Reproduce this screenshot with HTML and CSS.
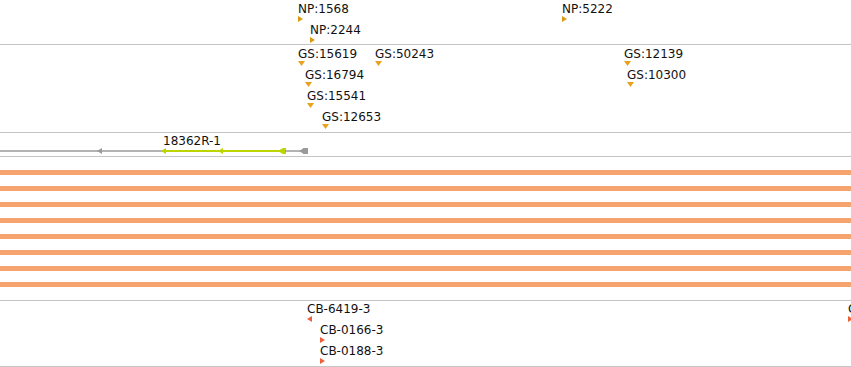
FILE: index.html
```html
<!DOCTYPE html>
<html lang="en">
<head>
    <meta charset="UTF-8">
    <title>Track View</title>
    <link rel="stylesheet" href="styles.css">
</head>
<body>

    <div class="tracks">
        <!-- NP track -->
        <div class="track track-np">
            <div class="feature" style="left:298px; top:2px;">
                <span class="label">NP:1568</span>
                <svg class="mark" width="6" height="6"><polygon points="0,0 5,3 0,6" fill="#d79a10"/></svg>
            </div>
            <div class="feature" style="left:310px; top:23px;">
                <span class="label">NP:2244</span>
                <svg class="mark" width="6" height="6"><polygon points="0,0 5,3 0,6" fill="#d79a10"/></svg>
            </div>
            <div class="feature" style="left:562px; top:2px;">
                <span class="label">NP:5222</span>
                <svg class="mark" width="6" height="6"><polygon points="0,0 5,3 0,6" fill="#d79a10"/></svg>
            </div>
        </div>

        <!-- GS track -->
        <div class="track track-gs">
            <div class="feature" style="left:298px; top:2px;">
                <span class="label">GS:15619</span>
                <svg class="mark" width="7" height="5"><polygon points="0,0 7,0 3.5,5" fill="#e9a21c"/></svg>
            </div>
            <div class="feature" style="left:375px; top:2px;">
                <span class="label">GS:50243</span>
                <svg class="mark" width="7" height="5"><polygon points="0,0 7,0 3.5,5" fill="#e9a21c"/></svg>
            </div>
            <div class="feature" style="left:305px; top:23px;">
                <span class="label">GS:16794</span>
                <svg class="mark" width="7" height="5"><polygon points="0,0 7,0 3.5,5" fill="#e9a21c"/></svg>
            </div>
            <div class="feature" style="left:307px; top:44px;">
                <span class="label">GS:15541</span>
                <svg class="mark" width="7" height="5"><polygon points="0,0 7,0 3.5,5" fill="#e9a21c"/></svg>
            </div>
            <div class="feature" style="left:322px; top:65px;">
                <span class="label">GS:12653</span>
                <svg class="mark" width="7" height="5"><polygon points="0,0 7,0 3.5,5" fill="#e9a21c"/></svg>
            </div>
            <div class="feature" style="left:624px; top:2px;">
                <span class="label">GS:12139</span>
                <svg class="mark" width="7" height="5"><polygon points="0,0 7,0 3.5,5" fill="#e9a21c"/></svg>
            </div>
            <div class="feature" style="left:627px; top:23px;">
                <span class="label">GS:10300</span>
                <svg class="mark" width="7" height="5"><polygon points="0,0 7,0 3.5,5" fill="#e9a21c"/></svg>
            </div>
        </div>

        <!-- gene model -->
        <div class="track track-gene">
            <span class="gene-name">18362R-1</span>
            <svg class="gene" width="851" height="23">
                <line x1="0" y1="18" x2="163" y2="18" stroke="#9a9a9a" stroke-width="1.5"/>
                <polygon points="97,18 102,15 102,21" fill="#9a9a9a"/>
                <line x1="163" y1="18" x2="284" y2="18" stroke="#bcd400" stroke-width="2"/>
                <polygon points="161,18 166,15 166,21" fill="#bcd400"/>
                <polygon points="218,18 223,15 223,21" fill="#bcd400"/>
                <polygon points="278,18 283,15 283,21" fill="#bcd400"/>
                <rect x="283" y="15" width="3" height="6" fill="#bcd400"/>
                <line x1="285" y1="18" x2="303" y2="18" stroke="#9a9a9a" stroke-width="1.5"/>
                <polygon points="299,18 304,15 304,21" fill="#9a9a9a"/>
                <rect x="303" y="15" width="5" height="6" fill="#9a9a9a"/>
            </svg>
        </div>

        <!-- reads -->
        <div class="track track-reads">
            <div class="read"></div>
            <div class="read"></div>
            <div class="read"></div>
            <div class="read"></div>
            <div class="read"></div>
            <div class="read"></div>
            <div class="read"></div>
            <div class="read"></div>
        </div>

        <!-- CB track -->
        <div class="track track-cb">
            <div class="feature" style="left:307px; top:1px;">
                <span class="label">CB-6419-3</span>
                <svg class="mark" width="6" height="6"><polygon points="5,0 0,3 5,6" fill="#f0603a"/></svg>
            </div>
            <div class="feature" style="left:320px; top:22px;">
                <span class="label">CB-0166-3</span>
                <svg class="mark" width="6" height="6"><polygon points="0,0 5,3 0,6" fill="#f0603a"/></svg>
            </div>
            <div class="feature" style="left:320px; top:43px;">
                <span class="label">CB-0188-3</span>
                <svg class="mark" width="6" height="6"><polygon points="0,0 5,3 0,6" fill="#f0603a"/></svg>
            </div>
            <div class="feature" style="left:848px; top:1px;">
                <span class="label">CB-1022-3</span>
                <svg class="mark" width="6" height="6"><polygon points="0,0 5,3 0,6" fill="#f0603a"/></svg>
            </div>
        </div>
    </div>

</body>
</html>
```

FILE: styles.css
```css
/* Reset */
* {
    margin: 0;
    padding: 0;
    box-sizing: border-box;
}

body {
    width: 851px;
    height: 367px;
    background: #fff;
    font-family: 'DejaVu Sans', sans-serif;
    font-size: 12px;
    color: #111;
    overflow: hidden;
}

/* Track stack */
.tracks {
    display: flex;
    flex-direction: column;
    width: 100%;
}

.track {
    position: relative;
    width: 100%;
    border-bottom: 1px solid #c4c4c4;
    overflow: hidden;
}

.track-np {
    height: 45px;
}

.track-gs {
    height: 88px;
}

.track-gene {
    height: 24px;
}

.track-reads {
    height: 144px;
    display: flex;
    flex-direction: column;
    gap: 11px;
    padding-top: 13px;
}

.track-cb {
    height: 66px;
}

/* Features on the track canvas */
.feature {
    position: absolute;
    display: flex;
    flex-direction: column;
    align-items: flex-start;
    white-space: nowrap;
}

.label {
    display: block;
    line-height: 14px;
}

.mark {
    display: block;
}

/* Gene model */
.gene-name {
    position: absolute;
    left: 163px;
    top: 1px;
    line-height: 14px;
}

.gene {
    display: block;
}

/* Reads */
.read {
    height: 5px;
    width: 100%;
    background: #f5a470;
    flex-shrink: 0;
}
```
